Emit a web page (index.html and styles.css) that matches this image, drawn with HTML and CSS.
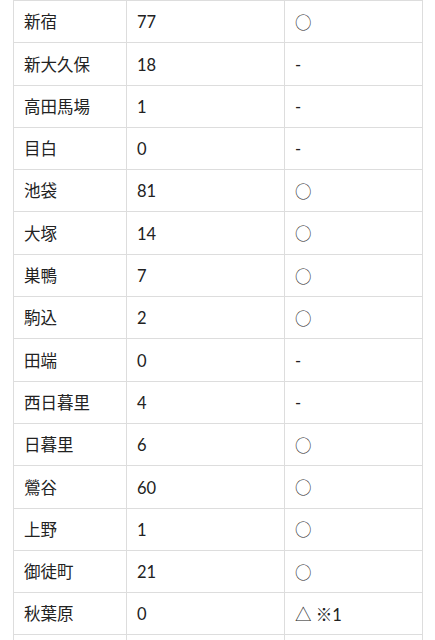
FILE: index.html
```html
<!DOCTYPE html>
<html lang="ja">
<head>
<meta charset="utf-8">
<link rel="stylesheet" href="styles.css">
</head>
<body>
<table class="stations">
<tbody>
<tr><td class="name">新宿</td><td class="num">77</td><td class="mark"><span class="sym">○</span></td></tr>
<tr><td class="name">新大久保</td><td class="num">18</td><td class="mark">-</td></tr>
<tr><td class="name">高田馬場</td><td class="num">1</td><td class="mark">-</td></tr>
<tr><td class="name">目白</td><td class="num">0</td><td class="mark">-</td></tr>
<tr><td class="name">池袋</td><td class="num">81</td><td class="mark"><span class="sym">○</span></td></tr>
<tr><td class="name">大塚</td><td class="num">14</td><td class="mark"><span class="sym">○</span></td></tr>
<tr><td class="name">巣鴨</td><td class="num">7</td><td class="mark"><span class="sym">○</span></td></tr>
<tr><td class="name">駒込</td><td class="num">2</td><td class="mark"><span class="sym">○</span></td></tr>
<tr><td class="name">田端</td><td class="num">0</td><td class="mark">-</td></tr>
<tr><td class="name">西日暮里</td><td class="num">4</td><td class="mark">-</td></tr>
<tr><td class="name">日暮里</td><td class="num">6</td><td class="mark"><span class="sym">○</span></td></tr>
<tr><td class="name">鶯谷</td><td class="num">60</td><td class="mark"><span class="sym">○</span></td></tr>
<tr><td class="name">上野</td><td class="num">1</td><td class="mark"><span class="sym">○</span></td></tr>
<tr><td class="name">御徒町</td><td class="num">21</td><td class="mark"><span class="sym">○</span></td></tr>
<tr><td class="name">秋葉原</td><td class="num">0</td><td class="mark"><span class="sym">△</span> <span class="sym">※</span>1</td></tr>
<tr><td class="name"></td><td class="num"></td><td class="mark"></td></tr>
</tbody>
</table>
</body>
</html>
```
FILE: styles.css
```css
html, body {
  margin: 0;
  padding: 0;
  background: #fff;
}
body {
  padding-left: 13px;
  font-family: Lato, "Noto Sans CJK JP", sans-serif;
  font-size: 16.5px;
  color: #222;
}
.stations {
  border-collapse: collapse;
  width: 409px;
  table-layout: fixed;
}
.stations td {
  border: 1px solid #ddd;
  height: 42.3px;
  padding: 3px 0 0 10px;
  box-sizing: border-box;
  vertical-align: middle;
  line-height: 1.2;
}
.stations td.name { width: 113px; }
.stations td.num { width: 158px; }
.stations td.mark { width: 138px; }
.sym {
  font-family: "Noto Sans CJK JP", sans-serif;
  font-weight: 300;
}
```
